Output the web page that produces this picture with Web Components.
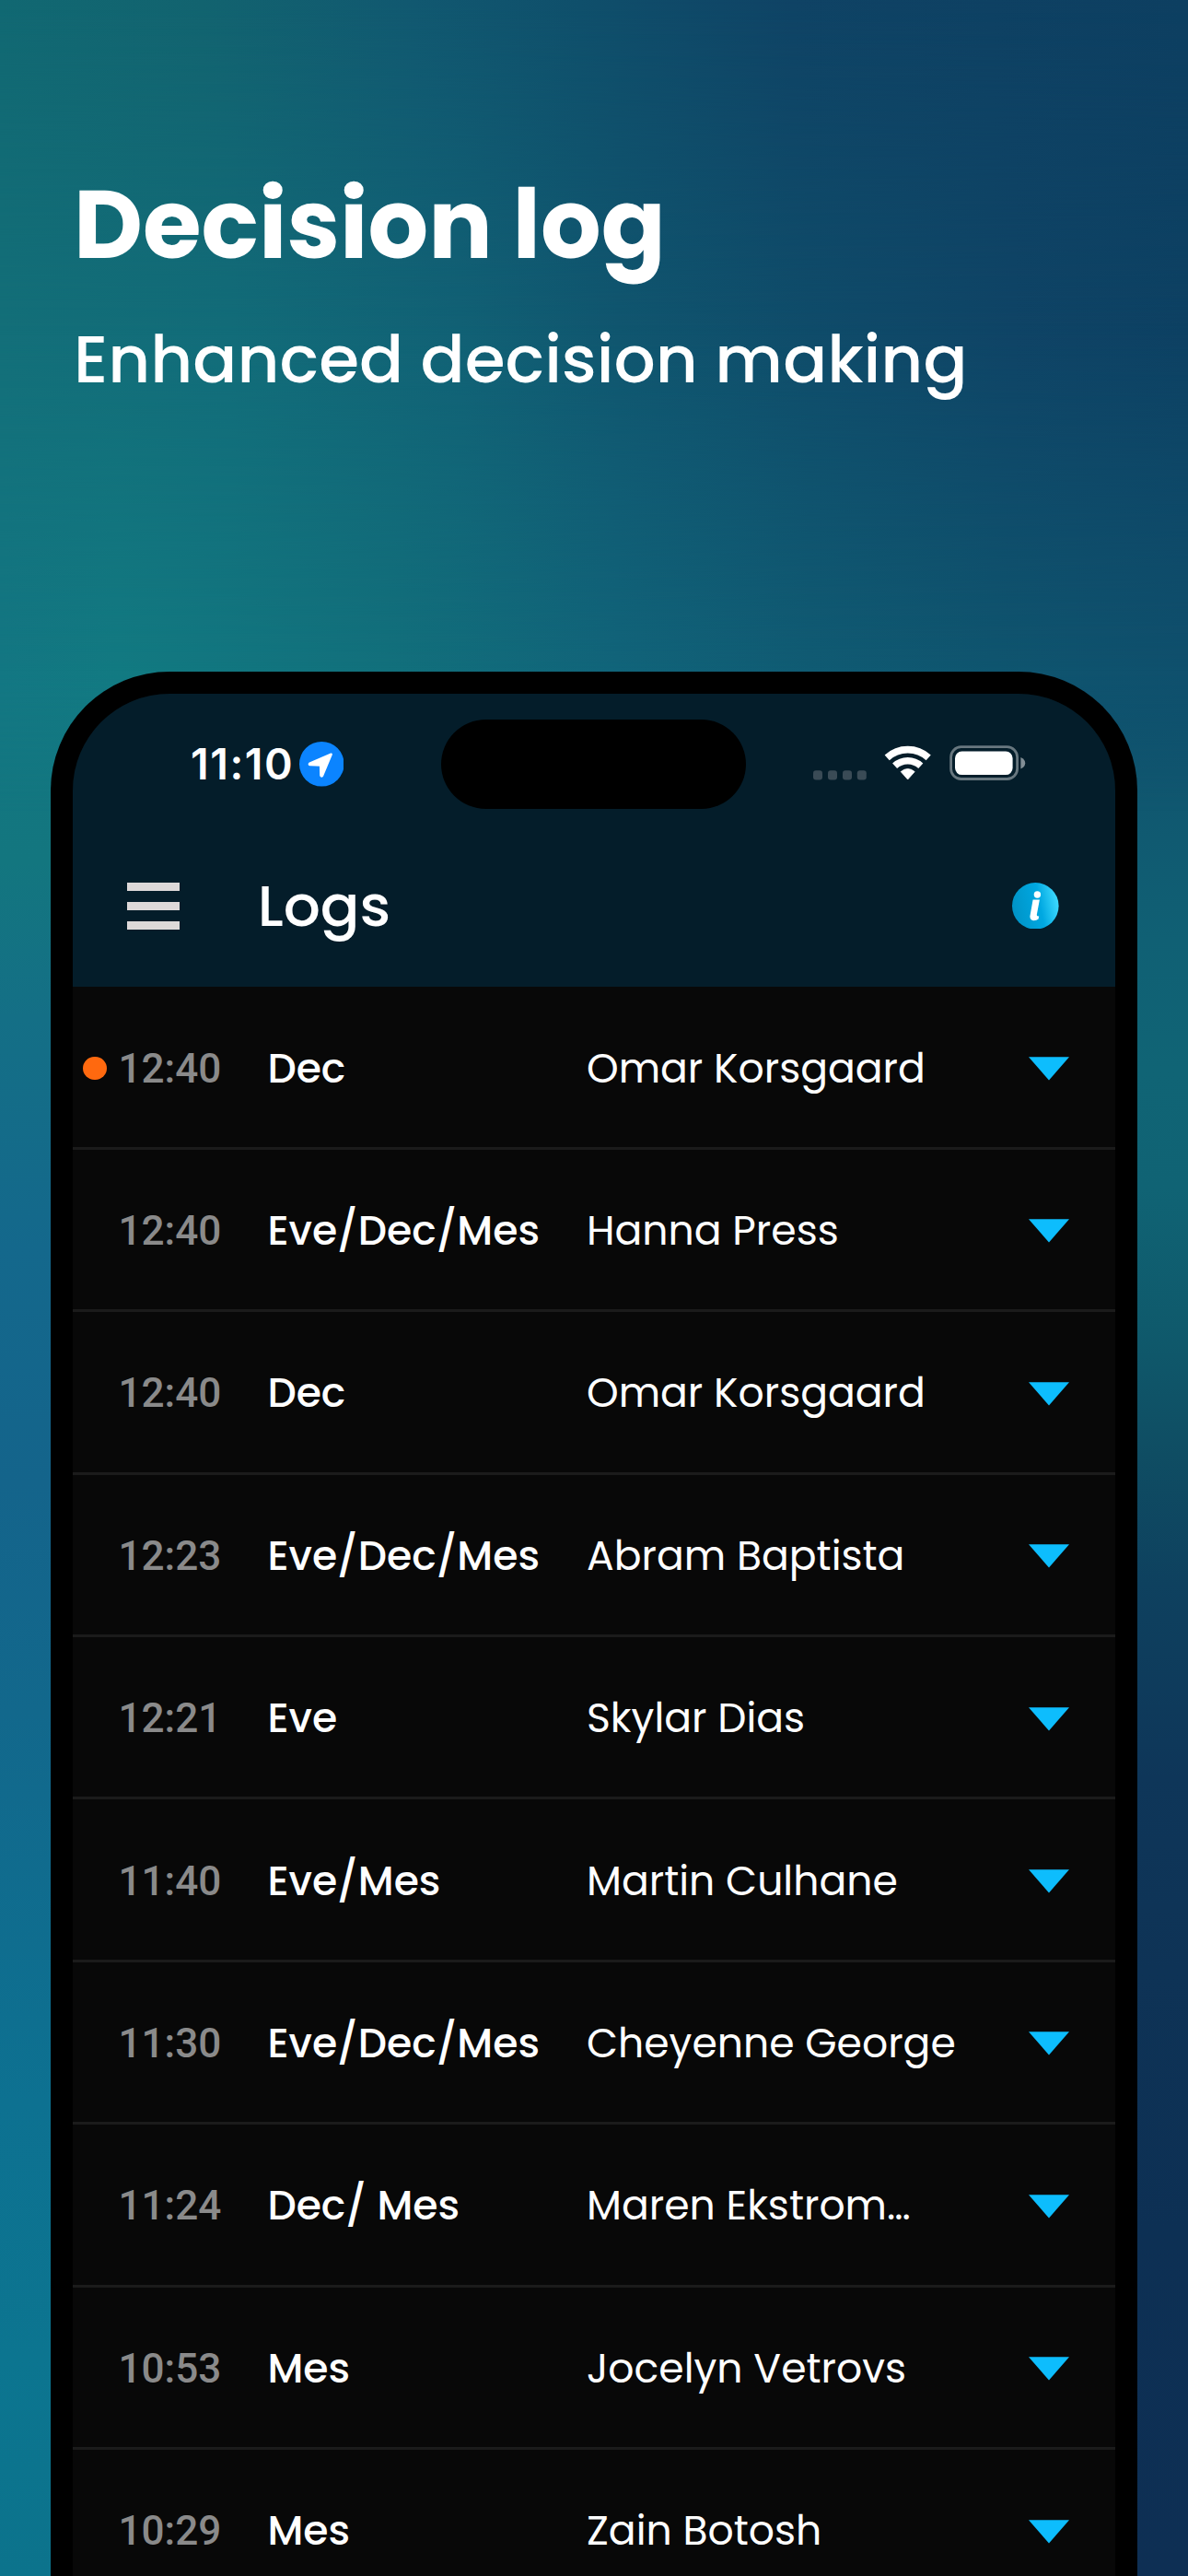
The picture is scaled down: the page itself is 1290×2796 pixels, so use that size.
<!DOCTYPE html>
<html lang="en">
<head>
<meta charset="utf-8">
<title>Decision log</title>
<style>
    html, body {
        margin: 0;
        padding: 0;
    }
    body {
        width: 1290px;
        height: 2796px;
        overflow: hidden;
        color: #fff;
        font-family: Poppins, Inter, "Liberation Sans", sans-serif;
    }
</style>
</head>
<body>

<promo-page>
    <promo-heading slot="heading">
        <span slot="title">Decision log</span>
        <span slot="subtitle">Enhanced decision making</span>
    </promo-heading>
    <phone-frame>
        <status-bar time="11:10"></status-bar>
        <app-bar>Logs</app-bar>
        <log-list></log-list>
    </phone-frame>
</promo-page>

<template id="promo-page">
    <style>
        :host {
            display: flex;
            flex-direction: column;
            position: relative;
            width: 1290px;
            height: 2796px;
            overflow: hidden;
            isolation: isolate;
        }
        .layer {
            position: absolute;
            inset: 0;
            z-index: -1;
        }
        .right {
            background: linear-gradient(180deg, #0e4c6b 600px, #10566f 838px, #106074 1020px, #106475 1160px, #106374 1290px, #0f5a6c 1440px, #0f4d63 1580px, #0e415f 1720px, #0e3659 1930px, #0e3356 2140px, #0d3054 2420px, #0e2f54 2796px);
        }
        .left {
            background: linear-gradient(180deg, #137781 729px, #13767f 936px, #146f86 1104px, #14688c 1356px, #14648b 1608px, #12688c 1860px, #0d7191 2280px, #0c7590 2560px, #0c738c 2796px);
            mask-image: linear-gradient(90deg, #000 200px, transparent 1100px);
        }
        .low {
            background: linear-gradient(90deg, #137783 0, #127a82 130px, #12707c 420px, #11647a 670px, #105b73 880px, #0f556f 1080px, #0f506d 1290px);
            mask-image: linear-gradient(180deg, #000 729px, transparent 880px);
        }
        .mid {
            background: linear-gradient(90deg, #136f79 0, #126c79 250px, #116175 500px, #10566f 670px, #0f4c6a 880px, #0f4466 1100px, #0d4163 1290px);
            mask-image: linear-gradient(180deg, #000 365px, transparent 729px);
        }
        .top {
            background: linear-gradient(90deg, #116872 0, #12636f 220px, #115870 450px, #0f4f6b 630px, #0f4365 860px, #0d3f61 1290px);
            mask-image: linear-gradient(180deg, #000 0, transparent 365px);
        }
    </style>
    <div class="layer right"></div>
    <div class="layer left"></div>
    <div class="layer low"></div>
    <div class="layer mid"></div>
    <div class="layer top"></div>
    <slot name="heading"></slot>
    <slot></slot>
</template>

<template id="promo-heading">
    <style>
        :host {
            display: flex;
            flex-direction: column;
            gap: 43px;
            box-sizing: border-box;
            height: 729px;
            padding: 184px 0 0 80px;
            white-space: nowrap;
        }
        h1, p {
            margin: 0;
        }
        h1 {
            font-size: 103.2px;
            font-weight: 700;
            line-height: 120px;
        }
        p {
            font-size: 71px;
            font-weight: 500;
            line-height: 86px;
        }
    </style>
    <h1><slot name="title"></slot></h1>
    <p><slot name="subtitle"></slot></p>
</template>

<template id="phone-frame">
    <style>
        :host {
            display: flex;
            flex-direction: column;
            flex: none;
            box-sizing: border-box;
            width: 1180px;
            height: 2067px;
            margin-left: 54.6px;
            border: 24px solid #000;
            border-bottom: 0;
            border-radius: 129px 129px 0 0;
            background: #080808;
            overflow: hidden;
        }
    </style>
    <slot></slot>
</template>

<template id="status-bar">
    <style>
        :host {
            display: grid;
            grid-template-columns: 1fr 331px 1fr;
            align-items: center;
            flex: none;
            box-sizing: border-box;
            height: 142px;
            padding-top: 11px;
            background: #041d2a;
        }
        .clock, .signals {
            display: flex;
            align-items: center;
        }
        .clock {
            padding-left: 128.5px;
            font: 600 46.5px/54px Inter, sans-serif;
        }
        .clock span {
            width: 117.8px;
            padding-bottom: 1px;
            box-sizing: border-box;
            letter-spacing: 1.5px;
        }
        .signals {
            justify-content: flex-end;
            gap: 19px;
            padding-right: 96.5px;
        }
        .island {
            height: 97px;
            border-radius: 49px;
            background: #000;
        }
        svg {
            display: block;
            flex: none;
        }
    </style>
    <div class="clock">
        <span></span>
        <svg width="48.6" height="48.6" viewBox="0 0 48.6 48.6">
            <circle cx="24.3" cy="24.3" r="24.3" fill="#0b84ff"/>
            <path d="M34.6 13.8 11.4 23.6Q10.4 24.6 11.6 25L23.2 25.4 23.5 36.8Q24 37.9 25 36.8Z" fill="#fff" stroke="#fff" stroke-width="2.6" stroke-linejoin="round"/>
        </svg>
    </div>
    <div class="island"></div>
    <div class="signals">
        <svg width="58" height="42" viewBox="0 0 58 42" fill="#3a4b56">
            <rect x="0" y="27.3" width="10" height="10.2" rx="3"/>
            <rect x="16" y="27.3" width="10" height="10.2" rx="3"/>
            <rect x="32" y="27.3" width="10" height="10.2" rx="3"/>
            <rect x="47.8" y="27.3" width="10" height="10.2" rx="3"/>
        </svg>
        <svg width="52" height="42" viewBox="0 0 52 42" fill="none" stroke="#fff">
            <path d="M3.2 13.4A33.3 33.3 0 0 1 48.2 13.4" stroke-width="7.6"/>
            <path d="M11.6 22.3A20.7 20.7 0 0 1 39.8 22.3" stroke-width="7.4"/>
            <path d="M18.2 28.6Q25.7 22.4 33.2 28.6L25.7 37Z" fill="#fff" stroke-width=".8" stroke-linejoin="round"/>
        </svg>
        <svg width="83" height="42" viewBox="0 0 83 42">
            <rect x="1.6" y="1.7" width="72" height="34.8" rx="11" fill="none" stroke="#fff" stroke-opacity=".4" stroke-width="2.8"/>
            <rect x="6" y="6.5" width="62.6" height="25.6" rx="7.5" fill="#fff"/>
            <path d="M77.4 12.9Q82.2 15 82.2 19.2T77.4 25.5Z" fill="#fff" fill-opacity=".5"/>
        </svg>
    </div>
</template>

<template id="app-bar">
    <style>
        :host {
            display: flex;
            align-items: center;
            flex: none;
            box-sizing: border-box;
            height: 176.4px;
            padding: 0 61px 0 59.1px;
            background: #041d2a;
            font-size: 63px;
            font-weight: 500;
            line-height: 76px;
        }
        .menu {
            display: flex;
            flex-direction: column;
            gap: 12px;
            width: 57px;
            margin-right: 85px;
        }
        .menu i {
            height: 9px;
            background: #ded9d9;
        }
        svg {
            margin-left: auto;
        }
    </style>
    <div class="menu"><i></i><i></i><i></i></div>
    <slot></slot>
    <svg width="50.6" height="50.6" viewBox="0 0 50.6 50.6">
        <defs>
            <linearGradient id="info" x1="0" y1=".6" x2="1" y2=".4">
                <stop offset="0" stop-color="#0093c6"/>
                <stop offset=".6" stop-color="#00a8e1"/>
                <stop offset="1" stop-color="#40dbff"/>
            </linearGradient>
        </defs>
        <circle cx="25.3" cy="25.3" r="25.3" fill="url(#info)"/>
        <circle cx="27.4" cy="13" r="3.7" fill="#fff"/>
        <path d="M22.6 18.6H29.9L26.8 35Q26.6 36.8 29.2 36.3L28.6 39.6Q26.6 41.2 23.4 41.2 19.2 40.8 19.4 36.6Z" fill="#fff"/>
    </svg>
</template>

<template id="log-list">
    <style>
        :host {
            display: flex;
            flex-direction: column;
        }
    </style>
</template>

<template id="log-row">
    <style>
        :host {
            display: grid;
            grid-template-columns: 38px 162px 346.6px 479.9px 44px;
            align-items: center;
            flex: none;
            box-sizing: border-box;
            height: 176.4px;
            padding: 3px 0 0 11.8px;
            border-bottom: 3px solid #1b1b1b;
            font-size: 44.1px;
            font-weight: 400;
            line-height: 60px;
            white-space: nowrap;
        }
        .dot {
            width: 25.4px;
            height: 25.4px;
            border-radius: 50%;
        }
        :host([unread]) .dot {
            background: #ff690f;
        }
        .time {
            color: #8a8a8a;
            font-family: Roboto, sans-serif;
            font-weight: 500;
        }
        .tags {
            font-weight: 500;
        }
        svg {
            display: block;
        }
    </style>
    <span class="dot"></span>
    <span class="time"></span>
    <span class="tags"></span>
    <span class="name"></span>
    <svg width="44" height="27" viewBox="0 0 44 27"><path d="M0 1.2H44L22 26.5Z" fill="#0dbdfd"/></svg>
</template>

<script>
    class BaseElement extends HTMLElement {

        /**
         * Clone the template named after the tag.
         */
        constructor() {
            super();
            this.attachShadow({ mode: 'open' });
            const template = document.getElementById(this.localName).content;
            this.shadowRoot.appendChild(template.cloneNode(true));
        }
    }

    class StatusBar extends BaseElement {

        connectedCallback() {
            this.shadowRoot.querySelector('.clock span').textContent = this.getAttribute('time');
        }
    }

    class LogRow extends BaseElement {

        /**
         * Fill the columns from the attributes.
         */
        connectedCallback() {
            ['time', 'tags', 'name'].forEach(column => {
                this.shadowRoot.querySelector(`.${column}`).textContent = this.getAttribute(column);
            });
        }
    }

    class LogList extends BaseElement {

        connectedCallback() {
            entries.forEach(([time, tags, name, unread]) => {
                const $row = document.createElement('log-row');
                $row.setAttribute('time', time);
                $row.setAttribute('tags', tags);
                $row.setAttribute('name', name);
                $row.toggleAttribute('unread', Boolean(unread));
                this.shadowRoot.appendChild($row);
            });
        }
    }

    const entries = [
        ['12:40', 'Dec', 'Omar Korsgaard', true],
        ['12:40', 'Eve/Dec/Mes', 'Hanna Press'],
        ['12:40', 'Dec', 'Omar Korsgaard'],
        ['12:23', 'Eve/Dec/Mes', 'Abram Baptista'],
        ['12:21', 'Eve', 'Skylar Dias'],
        ['11:40', 'Eve/Mes', 'Martin Culhane'],
        ['11:30', 'Eve/Dec/Mes', 'Cheyenne George'],
        ['11:24', 'Dec/ Mes', 'Maren Ekstrom…'],
        ['10:53', 'Mes', 'Jocelyn Vetrovs'],
        ['10:29', 'Mes', 'Zain Botosh']
    ];

    customElements.define('promo-page', class extends BaseElement {});
    customElements.define('promo-heading', class extends BaseElement {});
    customElements.define('phone-frame', class extends BaseElement {});
    customElements.define('app-bar', class extends BaseElement {});
    customElements.define('status-bar', StatusBar);
    customElements.define('log-row', LogRow);
    customElements.define('log-list', LogList);
</script>
</body>
</html>
